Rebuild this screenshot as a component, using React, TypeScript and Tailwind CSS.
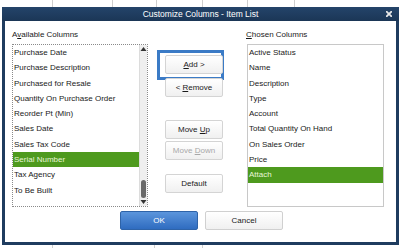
const available = [
  'Purchase Date',
  'Purchase Description',
  'Purchased for Resale',
  'Quantity On Purchase Order',
  'Reorder Pt (Min)',
  'Sales Date',
  'Sales Tax Code',
  'Serial Number',
  'Tax Agency',
  'To Be Built',
]

const chosen = [
  'Active Status',
  'Name',
  'Description',
  'Type',
  'Account',
  'Total Quantity On Hand',
  'On Sales Order',
  'Price',
  'Attach',
]

function Row({ label, selected }: { label: string; selected?: boolean }) {
  return (
    <div
      className={
        selected
          ? 'h-[15.3px] leading-[15.3px] pl-[1px] bg-[#4e9a1e] text-[#e8f6d8] whitespace-nowrap'
          : 'h-[15.3px] leading-[15.3px] pl-[1px] text-[#1a1a1a] whitespace-nowrap'
      }
    >
      {label}
    </div>
  )
}

function Btn({ children, disabled }: { children: React.ReactNode; disabled?: boolean }) {
  return (
    <div
      className={
        'w-[58px] h-[19px] rounded-[2px] border border-[#d4d4d4] bg-gradient-to-b from-white to-[#f0f0f0] flex items-center justify-center ' +
        (disabled ? 'text-[#a8a8a8]' : 'text-[#1a1a1a]')
      }
    >
      {children}
    </div>
  )
}

export default function App() {
  return (
    <div
      className="w-[399px] h-[248px] bg-white overflow-hidden text-[8px]"
      style={{ fontFamily: '"Liberation Sans", Arial, sans-serif' }}
    >
      {/* background grid peeking out above */}
      <div className="h-[7px] flex">
        <div className="w-[53px] border-r border-[#cfcfcf]" />
        <div className="w-[60px] border-r border-[#cfcfcf]" />
        <div className="w-[44px] border-r border-[#cfcfcf]" />
        <div className="w-[46px] border-r border-[#cfcfcf]" />
        <div className="w-[45px] border-r border-[#cfcfcf]" />
        <div className="w-[47px] border-r border-[#cfcfcf]" />
      </div>

      {/* dialog */}
      <div className="ml-[2px] w-[397px] h-[238px] border-x-[3px] border-b-[3px] border-[#1f3c5f] flex flex-col">
        <div className="h-[14px] -mx-[3px] bg-gradient-to-b from-[#24446a] to-[#1b3656] flex items-center relative">
          <div className="flex-1 text-center text-white text-[8.5px]">Customize Columns - Item List</div>
          <svg width="6" height="6" viewBox="0 0 6 6" className="absolute right-[7px] top-[4px]">
            <path d="M0.8 0.8 L5.2 5.2 M5.2 0.8 L0.8 5.2" stroke="#e8e8e8" strokeWidth="1.8" strokeLinecap="square" />
          </svg>
        </div>

        <div className="flex-1 pt-[8px] pl-[7px]">
          <div className="flex">
            {/* left */}
            <div className="w-[136px]">
              <div className="h-[11px] leading-[11px] text-[#1a1a1a]">
                A<span className="underline">v</span>ailable Columns
              </div>
              <div className="mt-[4px] h-[163px] border border-dotted border-[#8a8a8a] flex">
                <div className="flex-1 overflow-hidden">
                  {available.map((a) => (
                    <Row key={a} label={a} selected={a === 'Serial Number'} />
                  ))}
                </div>
                <div className="w-[8px] bg-[#efefef] border-l border-[#dcdcdc] flex flex-col items-center">
                  <svg width="7" height="6" viewBox="0 0 7 6" className="mt-[1px]">
                    <path d="M3.5 1 L6.5 5 L0.5 5 Z" fill="#333" />
                  </svg>
                  <div className="flex-1" />
                  <div className="w-[5px] h-[18px] rounded-full bg-[#6a6a6a]" />
                  <svg width="7" height="6" viewBox="0 0 7 6" className="mt-[1px] mb-[1px]">
                    <path d="M0.5 1 L6.5 1 L3.5 5 Z" fill="#333" />
                  </svg>
                </div>
              </div>
            </div>

            {/* middle */}
            <div className="w-[99px] pt-[21px]">
              <div className="ml-[9px] w-[67px] h-[30px] border-[3px] border-[#3b7bc6] pt-[2px] pl-[5px]">
                <Btn>
                  <span className="underline">A</span>dd &gt;
                </Btn>
              </div>
              <div className="ml-[17px] mt-[-2px] flex flex-col">
                <Btn>
                  &lt; <span className="underline ml-[2px]">R</span>emove
                </Btn>
                <div className="h-[23px]" />
                <Btn>
                  Move&nbsp;<span className="underline">U</span>p
                </Btn>
                <div className="h-[2px]" />
                <Btn disabled>
                  Move&nbsp;<span className="underline">D</span>own
                </Btn>
                <div className="h-[14px]" />
                <Btn>Default</Btn>
              </div>
            </div>

            {/* right */}
            <div className="w-[137px]">
              <div className="h-[11px] leading-[11px] text-[#1a1a1a] -ml-[1px]">
                <span className="underline">C</span>hosen Columns
              </div>
              <div className="mt-[4px] h-[163px] border border-[#c8c8c8]">
                {chosen.map((c) => (
                  <Row key={c} label={c} selected={c === 'Attach'} />
                ))}
              </div>
            </div>
          </div>

          <div className="mt-[4px] flex pl-[108px] gap-[7px]">
            <div className="w-[78px] h-[19px] rounded-[2px] border border-[#2e63a8] bg-gradient-to-b from-[#5b95dc] to-[#2f6cc0] text-white flex items-center justify-center">
              OK
            </div>
            <div className="w-[78px] h-[19px] rounded-[2px] border border-[#d0d0d0] bg-gradient-to-b from-white to-[#f0f0f0] text-[#1a1a1a] flex items-center justify-center">
              Cancel
            </div>
          </div>
        </div>
      </div>

      <div className="h-[3px] flex">
        <div className="w-[53px] border-r border-[#cfcfcf]" />
        <div className="w-[102px] border-r border-[#cfcfcf]" />
        <div className="w-[48px] border-r border-[#cfcfcf]" />
      </div>
    </div>
  )
}
